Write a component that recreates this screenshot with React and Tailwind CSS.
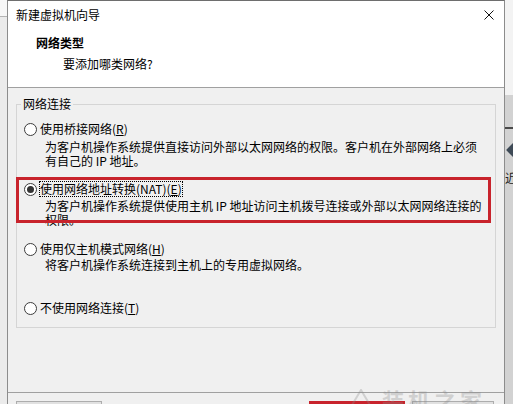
import React from 'react';

const Radio = ({ checked }) => (
  <span className="flex h-[13px] w-[13px] shrink-0 items-center justify-center rounded-full border border-[#3c3c3c] bg-white">
    {checked && <span className="h-[7px] w-[7px] rounded-full bg-[#333]" />}
  </span>
);

// one choice in the network group: radio row plus optional description lines
const Option = ({ checked, focused, label, lines = [], gap = 'mt-[2px]', className = '', children }) => (
  <div className={`relative ${className}`}>
    <div className="flex h-[16px] items-center gap-[2px] pl-[7px]">
      <Radio checked={checked} />
      <span
        className={`h-[16px] border px-0 leading-[14px] whitespace-nowrap ${
          focused ? 'border-dotted border-black' : 'border-transparent'
        }`}
      >
        {label}
      </span>
    </div>
    {lines.length > 0 && (
      <div className={`${gap} pl-[28px] leading-[14px]`}>
        {lines.map((l, i) => (
          <div key={i} className="whitespace-nowrap">{l}</div>
        ))}
      </div>
    )}
    {children}
  </div>
);

const App = () => {
  return (
    <div className="flex h-[404px] w-[513px] overflow-hidden bg-[#f0f0f0] font-['Noto_Sans_CJK_SC',sans-serif] text-[12px] text-black">
      {/* window behind, left edge */}
      <div className="flex w-[7px] shrink-0 flex-col">
        <div className="h-[17px] shrink-0 border-b border-[#b4b4b4] bg-[#f7f7f7]" />
        <div className="flex-1 bg-[#ebebeb]" />
      </div>

      {/* wizard dialog */}
      <div className="relative flex w-[498px] shrink-0 flex-col overflow-hidden border-x border-t border-x-[#8c8c8c] border-t-[#6e6e6e] bg-[#f0f0f0]">
        <div className="h-[87px] shrink-0 border-b border-[#a0a0a0] bg-white">
          <div className="flex h-[28px] items-center justify-between pl-[8px] pr-[8px]">
            <span className="leading-[14px]">新建虚拟机向导</span>
            <svg width="10" height="10" viewBox="0 0 10 10" className="mr-[2px]">
              <path d="M0.5 0.5 L9.5 9.5 M9.5 0.5 L0.5 9.5" stroke="#111" strokeWidth="1" fill="none" />
            </svg>
          </div>
          <div className="mt-[7px] pl-[28px] font-bold leading-[14px]">网络类型</div>
          <div className="mt-[7px] pl-[55px] leading-[14px]">要添加哪类网络?</div>
        </div>

        <fieldset className="mx-[8px] mt-[9px] shrink-0 border border-[#d5d5d5] px-0 pt-[10px] pb-[11px]">
          <legend className="ml-[4px] px-[2px] leading-[14px]">网络连接</legend>

          <Option
            label={<>使用桥接网络(<u>R</u>)</>}
            gap="mt-[3px]"
            lines={[
              '为客户机操作系统提供直接访问外部以太网网络的权限。客户机在外部网络上必须',
              '有自己的 IP 地址。',
            ]}
          />

          <Option
            checked
            focused
            className="mt-[13px]"
            label={<>使用网络地址转换(NAT)(<u>E</u>)</>}
            gap="mt-[2px]"
            lines={[
              '为客户机操作系统提供使用主机 IP 地址访问主机拨号连接或外部以太网网络连接的',
              '权限。',
            ]}
          >
            <div className="pointer-events-none absolute top-[-4px] left-[-1px] h-[46px] w-[475px] border-[3px] border-[#c8232c]" />
          </Option>

          <Option
            className="mt-[14px]"
            label={<>使用仅主机模式网络(<u>H</u>)</>}
            gap="mt-[1px]"
            lines={['将客户机操作系统连接到主机上的专用虚拟网络。']}
          />

          <Option className="mt-[28px]" label={<>不使用网络连接(<u>T</u>)</>} />
        </fieldset>

        <div className="mt-[64px] flex shrink-0 border-t border-[#a0a0a0] px-[8px] pt-[8px]">
          <button className="h-[23px] w-[86px] border border-[#adadad] bg-[#e1e1e1]">帮助</button>
          <div className="mr-[2px] ml-auto flex gap-[7px]">
            <button className="h-[23px] w-[96px] border-[3px] border-[#c8232c] bg-[#e1e1e1]">下一步(N) &gt;</button>
            <button className="h-[23px] w-[82px] border border-[#adadad] bg-[#e1e1e1]">取消</button>
          </div>
        </div>

        {/* site watermark */}
        <div className="pointer-events-none absolute top-[382px] left-[340px] flex items-center gap-[8px] opacity-30">
          <svg width="26" height="22" viewBox="0 0 26 22">
            <path d="M13 1 L25 21 L1 21 Z" fill="none" stroke="#8a8a8a" strokeWidth="2" />
          </svg>
          <span className="text-[22px] font-bold tracking-[4px] text-[#8a8a8a]">装机之家</span>
        </div>
      </div>

      {/* window behind, right edge */}
      <div className="flex w-[8px] shrink-0 flex-col overflow-hidden">
        <div className="h-[95px] shrink-0 bg-[#f3f3f3]" />
        <div className="flex flex-1 flex-col bg-[#d2d2d2]">
          <div className="mt-[32px] h-[2px] shrink-0 bg-[#4a4a4a]" />
          <div className="mt-[14px] ml-[4px] h-[14px] w-[14px] shrink-0 rotate-45 bg-[#3e4a56]" />
          <div className="mt-[14px] w-[14px] shrink-0 leading-[14px] whitespace-nowrap text-[#222]">近</div>
        </div>
      </div>
    </div>
  );
};

export default App;
